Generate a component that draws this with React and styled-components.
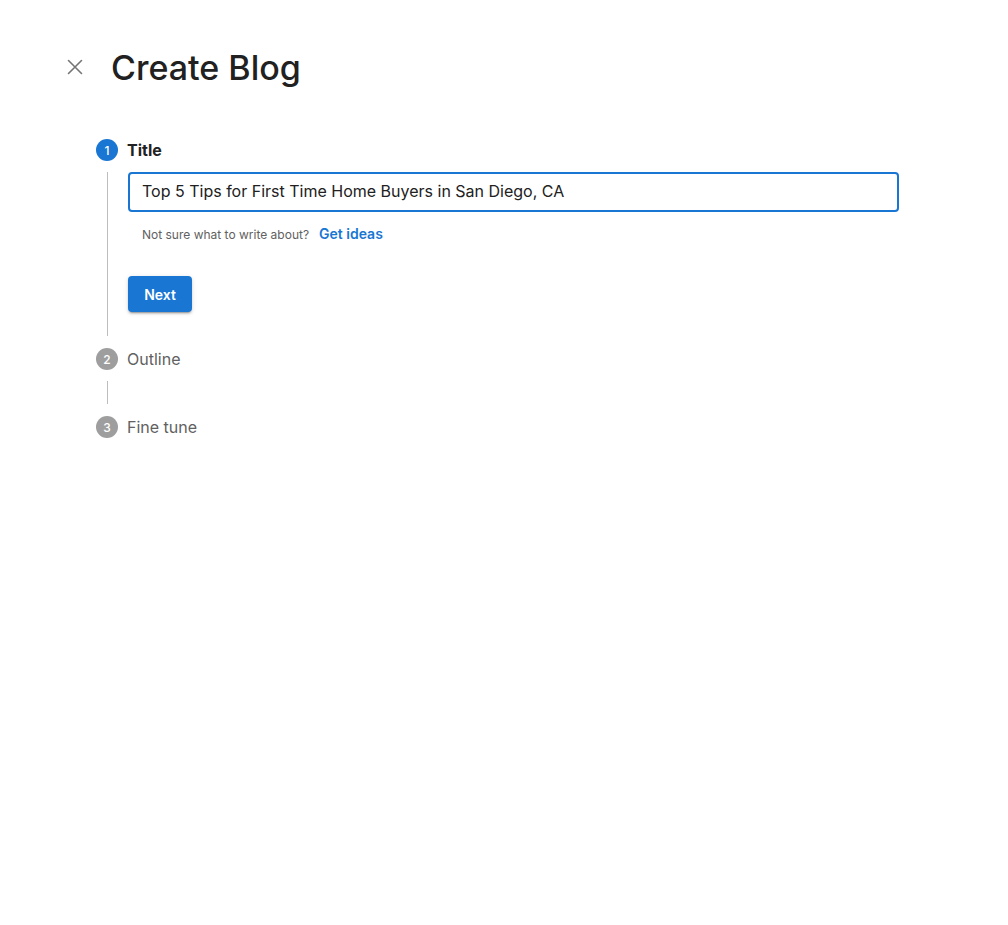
import React, { useEffect, useRef, useState } from 'react';
import styled, { createGlobalStyle } from 'styled-components';

const GlobalStyle = createGlobalStyle`
    body {
        margin: 0;
        background: #fff;
        font-family: Inter, "Noto Sans", sans-serif;
        color: #212121;
    }
`;

const steps = [
    { label: 'Title' },
    { label: 'Outline' },
    { label: 'Fine tune' },
];

const CloseIcon = () => (
    <svg width="16" height="16" viewBox="0 0 16 16">
        <path d="M1.5 1.5 L14.5 14.5 M14.5 1.5 L1.5 14.5" stroke="#757575" strokeWidth="1.6" strokeLinecap="round" />
    </svg>
);

const App = () => {
    const [title, setTitle] = useState('Top 5 Tips for First Time Home Buyers in San Diego, CA');
    const inputRef = useRef(null);
    const active = 0;

    useEffect(() => {
        const el = inputRef.current;
        if (el) {
            el.focus();
            el.setSelectionRange(el.value.length, el.value.length);
        }
    }, []);

    return <Page>
        <GlobalStyle />
        <Header>
            <CloseButton aria-label="Close">
                <CloseIcon />
            </CloseButton>
            <Heading>Create Blog</Heading>
        </Header>
        <Stepper>
            {steps.map((step, i) => (
                <Step key={step.label}>
                    <StepHead>
                        <StepIcon $active={i === active}>{i + 1}</StepIcon>
                        <StepLabel $active={i === active}>{step.label}</StepLabel>
                    </StepHead>
                    {i === active && (
                        <StepContent>
                            <TitleInput ref={inputRef} value={title} onChange={e => setTitle(e.target.value)} />
                            <Helper>
                                Not sure what to write about?
                                <IdeasLink href="#">Get ideas</IdeasLink>
                            </Helper>
                            <NextButton>Next</NextButton>
                        </StepContent>
                    )}
                    {i !== active && i < steps.length - 1 && <Connector />}
                </Step>
            ))}
        </Stepper>
    </Page>
};

export default App;

const Page = styled.div`
    min-height: 925px;
`;

const Header = styled.header`
    display: flex;
    align-items: center;
    gap: 24px;
    padding: 44px 0 0 63px;
    height: 46px;
`;

const CloseButton = styled.button`
    display: flex;
    align-items: center;
    justify-content: center;
    width: 24px;
    height: 24px;
    padding: 0;
    border: none;
    background: none;
    cursor: pointer;
`;

const Heading = styled.h1`
    margin: 0;
    font-size: 34px;
    font-weight: 500;
    color: #212121;
`;

const Stepper = styled.div`
    display: flex;
    flex-direction: column;
    padding: 49px 0 0 96px;
`;

const Step = styled.div`
    display: flex;
    flex-direction: column;
`;

const StepHead = styled.div`
    display: flex;
    align-items: center;
    gap: 9px;
    height: 22px;
`;

const StepIcon = styled.span`
    display: flex;
    align-items: center;
    justify-content: center;
    width: 22px;
    height: 22px;
    border-radius: 50%;
    background: ${p => p.$active ? '#1976d2' : '#9e9e9e'};
    color: #fff;
    font-size: 12px;
    font-weight: 500;
`;

const StepLabel = styled.span`
    font-size: 16px;
    font-weight: ${p => p.$active ? 700 : 400};
    color: ${p => p.$active ? '#212121' : '#616161'};
`;

const StepContent = styled.div`
    display: flex;
    flex-direction: column;
    align-items: flex-start;
    margin: 11px 0 12px 11px;
    padding: 0 0 24px 20px;
    border-left: 1px solid #bdbdbd;
`;

const Connector = styled.div`
    margin: 11px 0 12px 11px;
    height: 23px;
    border-left: 1px solid #bdbdbd;
`;

const TitleInput = styled.input`
    box-sizing: border-box;
    width: 771px;
    height: 40px;
    padding: 0 12px 2px;
    border: 2px solid #1976d2;
    border-radius: 4px;
    font-family: Inter, "Noto Sans", sans-serif;
    font-size: 16px;
    color: #212121;
    caret-color: #212121;
    outline: none;
`;

const Helper = styled.p`
    display: flex;
    align-items: baseline;
    gap: 10px;
    margin: 13px 0 0 14px;
    font-size: 12px;
    color: #616161;
`;

const IdeasLink = styled.a`
    font-size: 14px;
    font-weight: 600;
    color: #1976d2;
    text-decoration: none;
`;

const NextButton = styled.button`
    margin-top: 34px;
    width: 64px;
    height: 36px;
    border: none;
    border-radius: 4px;
    background: #1976d2;
    color: #fff;
    font-family: Inter, "Noto Sans", sans-serif;
    font-size: 14px;
    font-weight: 600;
    box-shadow: 0 3px 1px -2px rgba(0,0,0,0.2), 0 2px 2px 0 rgba(0,0,0,0.14), 0 1px 5px 0 rgba(0,0,0,0.12);
    cursor: pointer;
`;
